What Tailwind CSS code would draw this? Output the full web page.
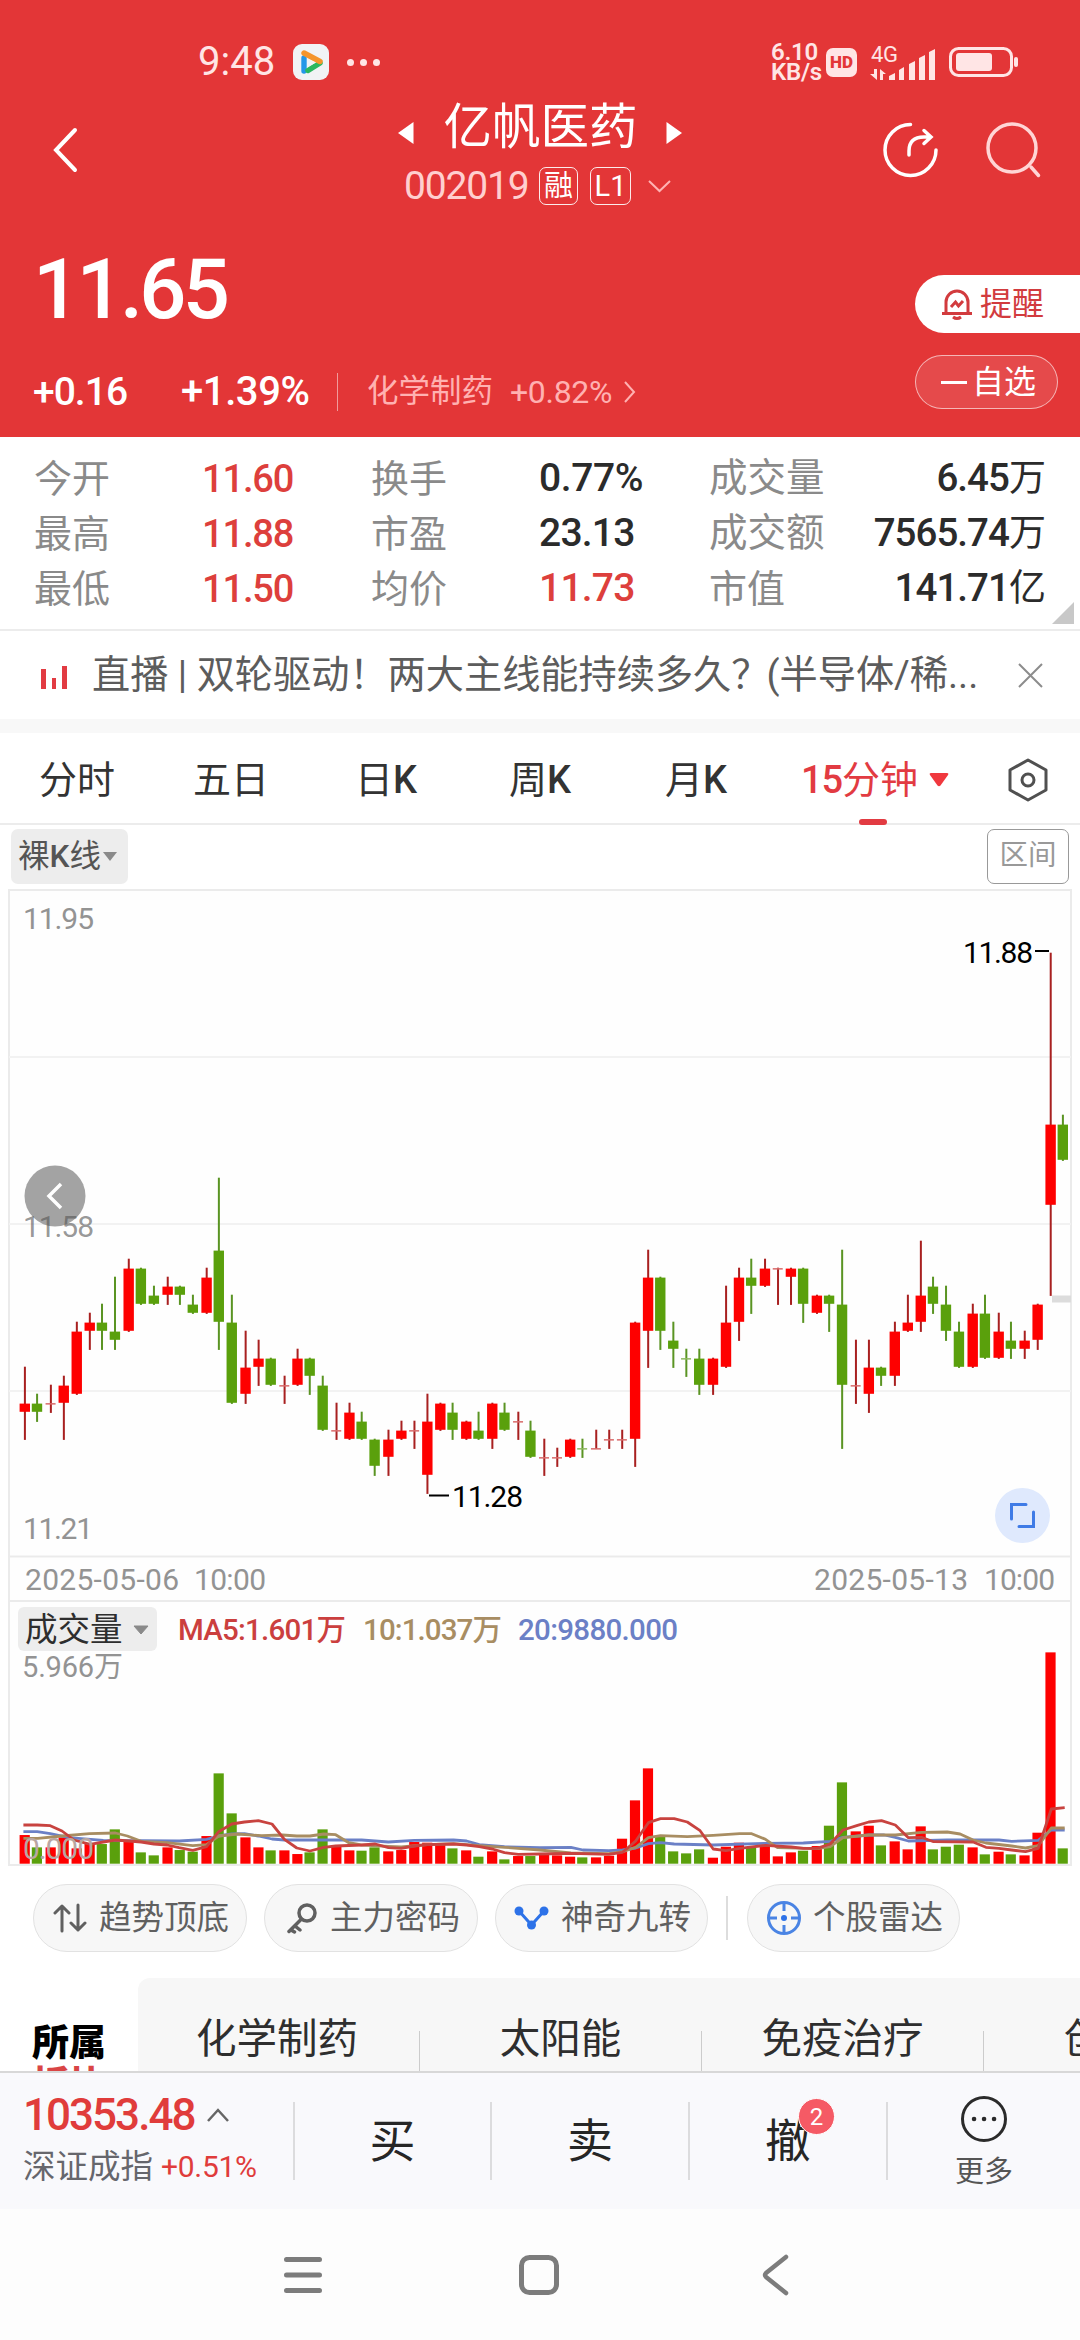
<!DOCTYPE html>
<html lang="zh-CN">
<head>
<meta charset="utf-8">
<title>亿帆医药 002019</title>
<script src="https://cdn.jsdelivr.net/npm/@tailwindcss/browser@4"></script>
</head>
<body class="w-[1080px] h-[2340px] overflow-hidden bg-white font-['Roboto','Noto_Sans_CJK_SC',sans-serif] leading-none text-[#333] whitespace-nowrap">
<div class="flex h-[2340px] flex-col">

<!-- Header -->
<header class="flex h-[437px] shrink-0 flex-col bg-[#e33637] text-white">
  <div class="flex h-[90px] items-center pt-[34px] pl-[198px] text-[#ffe5e5]">
    <div class="w-[95px] text-[40px]">9:48</div>
    <svg class="h-9 w-9" viewBox="0 0 36 36">
      <rect width="36" height="36" rx="9" fill="#f1f3f5"/>
      <g fill="none" stroke-width="5.4" stroke-linejoin="round" stroke-linecap="round">
        <path d="M11 27V14" stroke="#2497e8"/><path d="M15 26.5 27 19" stroke="#2bb85f"/><path d="M11 9 27 17.5" stroke="#f5952c"/>
      </g>
      <path d="M14 14.5 23 18.5 14 23.5Z" fill="#f1f3f5"/>
    </svg>
    <div class="ml-[18px] flex gap-[6px]">
      <i class="h-[7px] w-[7px] rounded-full bg-current"></i><i class="h-[7px] w-[7px] rounded-full bg-current"></i><i class="h-[7px] w-[7px] rounded-full bg-current"></i>
    </div>
    <div class="ml-[391px] w-[55px] text-[24px] leading-[20px] font-semibold tracking-[-0.01em]"><div>6.10</div><div>KB/s</div></div>
    <div class="flex h-[29px] w-[31px] items-center justify-center rounded-[7px] bg-current"><span class="text-[17px] font-black text-[#e33637]">HD</span></div>
    <svg class="ml-[12px] h-[40px] w-[72px]" viewBox="0 0 72 40" fill="currentColor">
      <text x="2" y="20" font-size="22" class="tracking-[-0.02em]">4G</text>
      <path d="M5 27h3v11L1 32h4zM11 38V27l6 5h-3v6zM20 38v-4l6-3v7zM30 38V28l5-3v13zM40 38V22l6-3v19zM50 38V16l6-3v25zM60 38V10l6-3v31z"/>
    </svg>
    <svg class="ml-[8px] h-[32px] w-[72px]" viewBox="0 0 72 32" fill="none">
      <rect x="1.5" y="2.5" width="61" height="27" rx="8" stroke="currentColor" stroke-width="3"/>
      <rect x="7" y="7" width="36" height="18" rx="3" fill="currentColor"/><rect x="65" y="11" width="4" height="10" rx="2" fill="currentColor"/>
    </svg>
  </div>

  <div class="flex h-[120px] items-center">
    <svg class="ml-[50px] h-[48px] w-[32px]" viewBox="0 0 32 48" fill="none" stroke="#fff" stroke-width="4" stroke-linecap="round"><path d="M25 4 6 24 25 44"/></svg>
    <div class="ml-[295px] flex w-[326px] flex-col items-center">
      <div class="flex h-[72px] items-center">
        <svg class="mt-[10px] h-[24px] w-[16px]" viewBox="0 0 16 24" fill="#fff"><path d="M15.500 1v22L0 12z"/></svg>
        <h1 class="mr-[28px] ml-[29px] text-[48.500px]">亿帆医药</h1>
        <svg class="mt-[10px] h-[24px] w-[16px]" viewBox="0 0 16 24" fill="#fff"><path d="M.5 1v22L16 12z"/></svg>
      </div>
      <div class="flex h-[44px] w-[272px] items-center">
        <span class="w-[135px] text-[39px] tracking-[-0.03em] text-[#ffcfcf]">002019</span>
        <span class="flex h-[38px] w-[39px] items-center justify-center rounded-[7px] border border-white/90 text-[29px]">融</span>
        <span class="ml-[12px] flex h-[38px] w-[41px] items-center justify-center rounded-[7px] border border-white/90 text-[29px]">L1</span>
        <svg class="ml-[17px] h-[14px] w-[23px]" viewBox="0 0 23 14" fill="none" stroke="#ffb3b3" stroke-width="2"><path d="M1 2l10.500 10L22 2"/></svg>
      </div>
    </div>
    <svg class="ml-[177px] h-[60px] w-[60px]" viewBox="0 0 60 60" fill="none" stroke="#fff" stroke-width="3.500" stroke-linecap="round"><path d="M30.500 4.500A25.500 25.500 0 1 0 56 30"/><path d="M29 35V31Q29 17 44 17H50M44 10.500 51 17 44 23.500"/></svg>
    <svg class="ml-[44px] h-[60px] w-[60px]" viewBox="0 0 60 60" fill="none" stroke="#ffd5d5" stroke-width="3.500" stroke-linecap="round"><circle cx="28" cy="28" r="24"/><path d="M47 47 54.500 55.500"/></svg>
  </div>

  <div class="flex h-[227px] justify-between pt-[5px] pl-[33px]">
    <div class="flex flex-col">
      <div class="mt-[28px] h-[94px] text-[83px] leading-[94px] font-medium tracking-[-0.045em]">11.65</div>
      <div class="mt-[28px] flex h-[54px] items-center">
        <span class="w-[148px] text-[39px] font-medium tracking-[-0.025em]">+0.16</span>
        <span class="w-[156px] text-[40px] font-medium tracking-[-0.01em]">+1.39%</span>
        <i class="h-[38px] w-px bg-white/50"></i>
        <span class="ml-[29px] text-[31.500px] text-[#ffb1b1]">化学制药</span>
        <span class="ml-[17px] w-[113px] text-[32px] tracking-[-0.01em] text-[#ffb1b1]">+0.82%</span>
        <svg class="h-[22px] w-[13px]" viewBox="0 0 13 22" fill="none" stroke="#ffb1b1" stroke-width="2"><path d="M2 1l9 10-9 10"/></svg>
      </div>
    </div>
    <div class="flex w-[165px] flex-col pt-[60px]">
      <div class="flex h-[58px] items-center rounded-l-full bg-white pl-[26px] text-[32px] text-[#d23b3e]">
        <svg class="mr-[7px] h-[34px] w-[32px]" viewBox="0 0 32 34" fill="none" stroke="currentColor" stroke-width="3"><path d="M5 26V15a11 11 0 0 1 22 0v11M1 26.500H31M12 30q4 3 8 0"/><path d="M10 20l4.500-5 3 4 4.500-5"/></svg>提醒
      </div>
      <div class="mt-[22px] flex h-[54px] w-[143px] items-center rounded-full border border-white/60 bg-white/10 pl-[25px] text-[32px]"><i class="mr-[5px] h-[3px] w-[26px] bg-white"></i>自选</div>
    </div>
  </div>
</header>

<!-- Quote figures -->
<section class="relative h-[194px] shrink-0 border-b-2 border-[#ececec] pt-[14px] pl-[34px]">
  <div class="grid auto-rows-[55px] grid-cols-[168px_169px_168px_170px_335px] items-center text-[38px] text-[#8a8a8a]">
    <span>今开</span><b class="font-medium tracking-[-0.03em] text-[#dd3f3c]">11.60</b><span>换手</span><b class="text-[39px] font-medium tracking-[-0.01em] text-[#2b2b2b]">0.77%</b>
    <span class="text-[38.500px]">成交量</span>
    <span>最高</span><b class="font-medium tracking-[-0.03em] text-[#dd3f3c]">11.88</b><span>市盈</span><b class="text-[39px] font-medium tracking-[-0.02em] text-[#2b2b2b]">23.13</b>
    <span class="text-[38.500px]">成交额</span>
    <span>最低</span><b class="font-medium tracking-[-0.03em] text-[#dd3f3c]">11.50</b><span>均价</span><b class="text-[39px] font-medium tracking-[-0.02em] text-[#dd3f3c]">11.73</b>
    <span>市值</span>
  </div>
  <div class="absolute top-[14px] right-[35px] grid auto-rows-[55px] items-center justify-items-end text-[38.500px] font-medium tracking-[-0.025em] text-[#2b2b2b]">
    <span>6.45<span class="text-[37px] font-normal">万</span></span><span>7565.74<span class="text-[37px] font-normal">万</span></span><span>141.71<span class="text-[37px] font-normal">亿</span></span>
  </div>
  <svg class="absolute right-[6px] bottom-[5px] h-[22px] w-[22px]" viewBox="0 0 22 22" fill="#c8c8c8"><path d="M22 0v22H0z"/></svg>
</section>

<!-- Live banner -->
<section class="flex h-[88px] shrink-0 items-center pl-[40px] text-[38.200px] text-[#5c5c5c]">
  <svg class="mt-[6px] mr-[24px] h-[24px] w-[28px]" viewBox="0 0 28 24"><path d="M1 3h5v20H1z" fill="#e23b42"/><path d="M12 12h4v11h-4z" fill="#e23b42"/><path d="M22 0h5v23h-5z" fill="#e23b42"/></svg>
  <span class="w-[890px] overflow-hidden py-2">直播 | 双轮驱动！两大主线能持续多久？<span class="-ml-[3px]">(半导体/稀...</span></span>
  <svg class="ml-[36px] h-[25px] w-[25px]" viewBox="0 0 25 25" stroke="#8c8c8c" stroke-width="2"><path d="M1 1l23 23M24 1 1 24"/></svg>
</section>
<div class="h-[14px] shrink-0 bg-[#f8f8f8]"></div>

<!-- Period tabs -->
<nav class="flex h-[92px] shrink-0 items-center border-b-2 border-[#ececec] pt-[3px] pl-[39px] text-[38px] text-[#333]">
  <span class="w-[154px]">分时</span><span class="w-[162px]">五日</span><span class="w-[154px]">日<b class="font-medium">K</b></span><span class="w-[156px]">周<b class="font-medium">K</b></span><span class="w-[136px]">月<b class="font-medium">K</b></span>
  <span class="relative w-[128px] text-[#e23b42]"><b class="font-medium tracking-[-0.03em]">15</b>分钟<i class="absolute -bottom-[26px] left-[58px] h-[6px] w-[28px] rounded-[3px] bg-[#e23b42]"></i></span>
  <svg class="h-[14px] w-[20px]" viewBox="0 0 20 14" fill="#f0383e"><path d="M2 0h16q2 0 1 2L11.500 12.500q-1.500 1.500-3 0L1 2Q0 0 2 0z"/></svg>
  <svg class="ml-[58px] h-[44px] w-[42px]" viewBox="0 0 42 44" fill="none" stroke="#505050" stroke-width="3" stroke-linejoin="round"><path d="M21 2 39 12v20L21 42 3 32V12z"/><circle cx="21" cy="22" r="6"/></svg>
</nav>

<!-- Chart toolbar -->
<div class="flex h-[63px] shrink-0 items-center justify-between pr-[11px] pl-[11px]">
  <div class="flex h-[55px] w-[117px] items-center rounded-[7px] bg-[#ededed] pl-[7px] text-[31.500px] text-[#555]">裸<b class="font-medium">K</b>线<svg class="ml-[2px] h-[9px] w-[14px]" viewBox="0 0 14 9" fill="#8a8a8a"><path d="M0 0h14L7 9z"/></svg></div>
  <div class="flex h-[55px] w-[82px] items-center justify-center rounded-[7px] border border-[#999] text-[28.500px] text-[#999]">区间</div>
</div>

<!-- Candles, dates and volume -->
<svg id="chart" class="h-[980px] w-[1080px] shrink-0" viewBox="0 888 1080 980">
  <rect x="9" y="890" width="1062" height="975" fill="#fefefe" stroke="#ebebeb" stroke-width="2"/>
  <path d="M9 1057H1071M9 1224H1071M9 1391H1071" stroke="#f2f2f2" stroke-width="2"/>
  <path d="M9 1556.500H1071M9 1601H1071" stroke="#ebebeb" stroke-width="2"/>
  <path d="M1052 1299H1071" stroke="#dcdcdc" stroke-width="7"/>
  <g id="candles"></g>
  <g id="volume"></g>
  <g font-size="30" fill="#939393">
    <text x="23" y="929" textLength="71">11.95</text>
    <text x="23" y="1539" textLength="70">11.21</text>
    <text x="25" y="1590" textLength="154">2025-05-06</text><text x="194" y="1590" textLength="72">10:00</text>
    <text x="814" y="1590" textLength="154">2025-05-13</text><text x="984" y="1590" textLength="71">10:00</text>
    <text x="22" y="1677" font-size="29" textLength="101">5.966万</text>
    <text x="23" y="1859" textLength="71" fill="#b9a6a2">0.000</text>
  </g>
  <circle cx="55" cy="1196" r="30.500" fill="#a3a3a3"/>
  <path d="M61 1184 49 1196 61 1208" fill="none" stroke="#fff" stroke-width="3.500"/>
  <text x="23" y="1237" font-size="30" fill="#555" fill-opacity=".62" textLength="71">11.58</text>
  <circle cx="1022.500" cy="1515.500" r="27.500" fill="#dfe9fd"/>
  <path d="M1026 1504.500H1011.500V1519M1033.500 1512V1526.500H1019" fill="none" stroke="#3f7be6" stroke-width="3" stroke-linecap="round"/>
  <g font-size="30" fill="#000"><text x="963" y="963" textLength="70">11.88</text><text x="452" y="1507" textLength="71">11.28</text></g>
  <path d="M1035 951H1049M429 1495.500H449" stroke="#000" stroke-width="2"/>
  <rect x="18" y="1607" width="139" height="44" rx="6" fill="#ededed"/>
  <text x="25" y="1641" font-size="32.500" fill="#2e2e2e">成交量</text>
  <path d="M134 1626h14l-7 8z" fill="#8a8a8a" stroke="#8a8a8a" stroke-linejoin="round"/>
  <g font-size="29.500" font-weight="500"><text x="178" y="1640" fill="#cb3f3e" textLength="168">MA5:1.601万</text><text x="363" y="1640" fill="#a88d62" textLength="139">10:1.037万</text><text x="518" y="1640" fill="#6b80c6" textLength="160">20:9880.000</text></g>
</svg>

<!-- Tool chips -->
<div class="mt-[16px] flex h-[68px] shrink-0 items-center pl-[33px] text-[32.500px] text-[#606060]">
  <div class="flex h-full w-[214px] items-center rounded-full border border-[#e2e2e2] bg-[#f7f7f7] pl-[19px]"><svg class="mr-[12px] h-[30px] w-[34px]" viewBox="0 0 34 30" fill="none" stroke="currentColor" stroke-width="3" stroke-linecap="round" stroke-linejoin="round"><path d="M9 28V3M2 10l7-7 7 7M25 2v25M18 20l7 7 7-7"/></svg>趋势顶底</div>
  <div class="ml-[17px] flex h-full w-[214px] items-center rounded-full border border-[#e2e2e2] bg-[#f7f7f7] pl-[22px]"><svg class="mr-[13px] h-[32px] w-[30px]" viewBox="0 0 30 32" fill="none" stroke="currentColor" stroke-width="3.500" stroke-linecap="round"><circle cx="20" cy="11" r="8"/><path d="M14.500 17 2 29.500M8 24l5 4M4 28l3.500 2"/></svg>主力密码</div>
  <div class="ml-[17px] flex h-full w-[213px] items-center rounded-full border border-[#e2e2e2] bg-[#f7f7f7] pl-[18px]"><svg class="mr-[12px] h-[26px] w-[35px]" viewBox="0 0 35 26" fill="#2d72e8"><path d="M5 6 17.500 20 30 6" fill="none" stroke="#2d72e8" stroke-width="3"/><circle cx="5" cy="6" r="4.500"/><circle cx="30" cy="6" r="4.500"/><circle cx="17.500" cy="20" r="4.500"/></svg>神奇九转</div>
  <i class="ml-[18px] h-[44px] w-[2px] bg-[#ddd]"></i>
  <div class="ml-[19px] flex h-full w-[213px] items-center rounded-full border border-[#e2e2e2] bg-[#f7f7f7] pl-[18px]"><svg class="mr-[11px] h-[36px] w-[36px]" viewBox="0 0 36 36" fill="none" stroke="#4a84e4" stroke-width="3"><circle cx="18" cy="18" r="15.500"/><path d="M18 2v9M18 25v9M2 18h9M25 18h9"/><circle cx="18" cy="18" r="3" fill="#2d72e8" stroke="none"/></svg>个股雷达</div>
</div>

<!-- Sector strip -->
<div class="mt-[26px] flex h-[93px] shrink-0 overflow-hidden">
  <div class="w-[138px] pt-[46px] pl-[32px] text-[37px] leading-[40px] font-black text-black"><div>所属</div><div class="mt-[2px] text-[#d94545]">板块</div></div>
  <div class="flex flex-1 overflow-hidden rounded-tl-[12px] bg-[#f7f7f7] text-[40.500px] text-[#2e2e2e]">
    <div class="flex w-[282px] shrink-0 items-end"><span class="flex h-[93px] flex-1 items-center justify-center pt-[30px] pr-[3px]">化学制药</span><i class="h-[40px] w-px bg-[#ccc]"></i></div>
    <div class="flex w-[282px] shrink-0 items-end"><span class="flex h-[93px] flex-1 items-center justify-center pt-[30px]">太阳能</span><i class="h-[40px] w-px bg-[#ccc]"></i></div>
    <div class="flex w-[282px] shrink-0 items-end"><span class="flex h-[93px] flex-1 items-center justify-center pt-[30px]">免疫治疗</span><i class="h-[40px] w-px bg-[#ccc]"></i></div>
    <div class="flex w-[282px] shrink-0 items-center pt-[30px] pl-[80px]">创新药</div>
  </div>
</div>

<!-- Trade bar -->
<footer class="flex h-[138px] shrink-0 items-center border-t-2 border-[#d8d8d8] bg-[#f9f9fc]">
  <div class="flex w-[293px] flex-col pl-[23px]">
    <div class="flex h-[52px] items-center"><span class="w-[184px] text-[44px] font-medium tracking-[-0.045em] text-[#e03c3b]">10353.48</span><svg class="h-[14px] w-[22px]" viewBox="0 0 22 14" fill="none" stroke="#666" stroke-width="2.500"><path d="M1 13 11 2l10 11"/></svg></div>
    <div class="flex h-[52px] items-center text-[32.500px] text-[#66666c]">深证成指<span class="ml-[8px] text-[30px] tracking-[-0.01em] text-[#e03c3b]">+0.51%</span></div>
  </div>
  <i class="h-[78px] w-[2px] bg-[#dcdcde]"></i>
  <span class="flex w-[195px] justify-center text-[46px] text-[#262626]">买</span>
  <i class="h-[78px] w-[2px] bg-[#dcdcde]"></i>
  <span class="flex w-[196px] justify-center text-[46px] text-[#262626]">卖</span>
  <i class="h-[78px] w-[2px] bg-[#dcdcde]"></i>
  <span class="relative flex w-[196px] justify-center text-[46px] text-[#262626]">撤<b class="absolute -top-[20px] left-[108px] flex h-[37px] w-[37px] items-center justify-center rounded-full border border-white bg-[#f55a65] text-[24px] font-normal text-white">2</b></span>
  <i class="h-[78px] w-[2px] bg-[#dcdcde]"></i>
  <div class="flex flex-1 flex-col items-center text-[29px] text-[#555]">
    <svg class="mb-[15px] h-[48px] w-[48px]" viewBox="0 0 48 48" fill="none" stroke="#2b2b2b" stroke-width="3"><circle cx="24" cy="24" r="21.500"/><path d="M14 24h.1M24 24h.1M34 24h.1" stroke-width="4.500" stroke-linecap="round"/></svg>更多
  </div>
</footer>

<!-- System navigation -->
<div class="flex h-[131px] shrink-0 items-center bg-[#fdfdfd] pl-[283px] text-[#7c7c7c]">
  <svg class="h-[40px] w-[40px]" viewBox="0 0 40 40" stroke="currentColor" stroke-width="5" stroke-linecap="round"><path d="M3.500 4.500h33M3.500 20h33M3.500 35.500h33"/></svg>
  <svg class="ml-[195px] h-[42px] w-[42px]" viewBox="0 0 42 42" fill="none" stroke="currentColor" stroke-width="5"><rect x="3.500" y="3.500" width="35" height="35" rx="8"/></svg>
  <svg class="ml-[201px] h-[42px] w-[30px]" viewBox="0 0 30 42" fill="none" stroke="currentColor" stroke-width="4.500" stroke-linecap="round" stroke-linejoin="round"><path d="M25 3 5 19q-2 2 0 4L25 39"/></svg>
</div>
</div>

<script>
// Each candle: direction, then high, body top, body bottom, low in ticks of 0.01 above 11.28
const candles = `R14,10,9,6 G11,10,9,8 R12,10,10,9 R13,12,10,6 R19,18,11,11 R20,19,18,16 G21,19,18,16 G24,18,17,16 R26,25,18,18 G25,25,21,21
G23,22,21,21 R24,23,22,21 G23,23,22,21 G22,21,20,20 R25,24,20,20 G35,27,19,16 G22,19,10,10 R18,14,11,10 R17,15,14,12 G15,15,12,12
R13,12,12,10 R16,15,12,12 G15,15,13,11 G13,12,7,7 R10,7,7,6 R10,9,6,6 G9,8,6,6 G6,6,3,2 R7,6,4,2 R8,7,6,6
R8,7,7,5 R11,8,2,0 R10,10,7,7 G10,9,7,6 R8,8,6,6 G9,7,6,6 R10,10,6,5 G10,9,7,7 R9,8,8,6 G8,7,4,4
R6,4,4,2 R5,4,4,3 R6,6,4,4 G6,5,5,4 R7,5,5,5 R7,6,6,5 R7,6,6,5 R19,19,6,3 R27,24,18,14 G24,24,18,16
G19,17,16,14 G16,15,15,13 G16,15,12,11 R15,15,12,11 R23,19,14,14 R25,24,19,17 G26,24,23,20 R26,25,23,23 R25,25,25,21 R25,25,24,21
G25,25,21,19 R22,22,20,20 G22,22,21,18 G27,21,12,5 R17,12,12,10 R17,14,11,9 G14,14,13,12 R19,18,13,12 R22,19,18,18 R28,22,19,18
G24,23,21,20 G23,21,18,17 G19,18,14,14 R21,20,14,14 G22,20,15,15 R20,18,15,15 G19,17,16,15 R18,17,16,15 R21,21,17,16 R60,41,32,22 G42,41,37,37`.split(/\s+/);
// Bar heights in thirds of a pixel, measured up from the baseline
const volume = [86,49,49,79,46,59,59,103,65,34,25,49,41,36,83,271,151,79,49,40,40,29,34,103,51,40,39,49,37,41,65,63,56,46,40,21,37,13,23,23,29,25,21,19,19,24,75,190,286,81,37,31,43,18,51,63,49,53,22,34,39,53,114,244,97,114,55,67,43,112,43,51,57,49,28,36,28,25,93,634,46];
const averages = [
 ['#6b80c6','68,875 108,875 146,881 200,893 300,901 520,903 600,898 635,888 673,882 710,881 750,888 790,897 826,900 1050,900 1128,906 1203,901 1317,900 1355,903 1392,914 1465,920 1568,923 1658,922 1693,930 1768,932 1808,930 1846,924 1883,911 1918,908 1958,912 2071,915 2223,910 2333,909 2411,904 2448,892 2523,885 2568,885 2600,892 2638,903 2751,900 2901,900 2938,904 3015,901 3053,870 3092,870'],
 ['#a88d62','68,895 110,895 180,888 260,881 335,879 370,888 410,904 485,908 560,917 600,914 635,888 690,882 760,887 820,885 862,888 900,888 940,882 975,884 1013,908 1050,915 1128,919 1165,921 1240,914 1317,911 1392,917 1465,922 1568,930 1658,939 1768,941 1809,935 1846,922 1883,893 1918,887 1996,890 2071,886 2148,881 2183,881 2223,898 2258,923 2373,926 2411,920 2448,893 2523,885 2600,885 2676,877 2751,876 2788,882 2826,900 2863,909 2938,918 2978,924 3015,917 3053,864 3092,864'],
 ['#c8433f','68,855 108,855 146,857 180,873 215,900 262,913 300,906 335,900 375,903 410,906 447,912 485,915 520,923 560,931 600,920 635,875 673,852 710,846 750,842 790,852 826,898 862,924 900,933 940,922 975,918 1050,915 1090,912 1128,923 1165,925 1203,918 1240,914 1317,912 1355,915 1392,920 1430,927 1465,938 1505,943 1568,942 1658,940 1768,943 1808,937 1846,903 1883,848 1918,836 1958,836 1996,846 2033,872 2071,927 2108,932 2148,925 2223,916 2298,921 2333,925 2373,925 2411,912 2448,870 2488,857 2523,846 2560,842 2600,855 2638,893 2676,892 2711,905 2826,906 2863,922 2901,925 2938,930 2978,935 3015,925 3053,807 3092,803']];
let c = '', v = '';
candles.forEach((s, i) => {
  const red = s[0] === 'R', [h, t, b, l] = s.slice(1).split(',').map(Number);
  const x = 24.6 + 12.985 * i - (red ? 0 : 0.8), y = k => 1493.3 - 9 * k;
  const fill = red ? '#fe0000' : '#5aa00c', wick = red ? '#a82020' : '#5a9423';
  c += `<rect x="${x - .7}" y="${y(h) - .6}" width="2" height="${y(l) - y(h) + 1.2}" fill="${wick}"/>`;
  c += t === b ? `<rect x="${x - 5}" y="${y(t) - .2}" width="10" height="1.500" fill="${red ? '#d96a6a' : '#8db85f'}"/>`
               : `<rect x="${x - 5}" y="${y(t) + .3}" width="10.400" height="${y(b) - y(t) - .8}" fill="${fill}"/>`;
  v += `<rect x="${x - 5}" y="${1863.7 - volume[i] / 3}" width="10.200" height="${volume[i] / 3}" fill="${fill}"/>`;
});
averages.forEach(([color, pts]) => {
  const p = pts.split(' ').map(q => { const [a, b] = q.split(','); return (a / 2.904).toFixed(1) + ',' + (1540 + b / 3).toFixed(1); }).join(' ');
  v += `<polyline points="${p}" fill="none" stroke="${color}" stroke-width="2.800" stroke-linejoin="round"/>`;
});
document.getElementById('candles').innerHTML = c;
document.getElementById('volume').innerHTML = v;
</script>
</body>
</html>
